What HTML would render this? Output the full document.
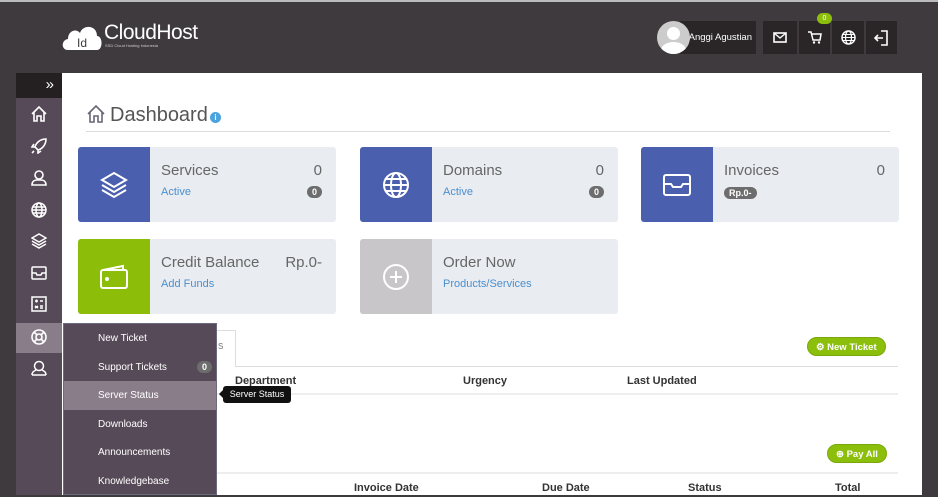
<!DOCTYPE html>
<html><head><meta charset="utf-8"><style>
*{margin:0;padding:0;box-sizing:border-box}
body{width:938px;height:495px;overflow:hidden;background:#3e3a3d;font-family:"Liberation Sans",sans-serif;position:relative}
.abs{position:absolute}
.main{left:62px;top:73px;width:860px;height:422px;background:#fff}
.side{left:16px;top:73px;width:46px;height:422px;background:#574a58}
.sidetop{left:16px;top:73px;width:46px;height:25px;background:#242022;color:#fff;font-size:15px;text-align:right;padding-right:8px;line-height:24px}
.si{position:absolute;left:16px;width:46px;height:30px;display:flex;align-items:center;justify-content:center}
.card{position:absolute;width:258px;height:75px;background:#e9ecf0;border-radius:3px;overflow:hidden}
.card .ic{position:absolute;left:0;top:0;width:72px;height:75px;display:flex;align-items:center;justify-content:center}
.card .t{position:absolute;left:83px;top:15px;font-size:15px;color:#666}
.card .v{position:absolute;right:14px;top:15px;font-size:15px;color:#666}
.card .l{position:absolute;left:83px;top:39px;font-size:11px;color:#4a8fd0}
.badge{position:absolute;background:#6d6d6d;color:#fff;font-size:9px;font-weight:bold;border-radius:8px;padding:1px 5px}
.dd{left:63px;top:323px;width:154px;height:172px;background:#574a58;border:1px solid #6a6a80}
.dd div{height:28.5px;line-height:30px;padding-left:34px;color:#fff;font-size:10px}
.th{position:absolute;font-size:11px;font-weight:bold;color:#333}
.btn{position:absolute;background:#8cbf0c;color:#fff;font-size:9.5px;font-weight:bold;border-radius:10px;height:19px;line-height:19px;padding:0 8px;border:1px solid #7aa80a}
.tb{position:absolute;top:21px;height:33px;background:#2a2627;display:flex;align-items:center;justify-content:center}
</style></head><body>
<div class="abs" style="left:0;top:0;width:938px;height:2px;background:#bbb"></div>
<!-- logo -->
<svg class="abs" style="left:61px;top:20px" width="42" height="32" viewBox="0 0 42 32"><path d="M7 30 C0 30 0 20 7 19 C7 11 15 8 19 13 C22 4 36 5 36 16 C42 16 42 30 36 30 Z" fill="#fff"/><text x="16" y="27" font-size="12" fill="#3e3a3d" font-family="Liberation Sans">Id</text></svg>
<div class="abs" style="left:104px;top:21px;color:#fff;font-size:21px;letter-spacing:-0.5px">CloudHost</div>
<div class="abs" style="left:105px;top:43px;color:#ccc;font-size:4px">SSD Cloud Hosting Indonesia</div>
<!-- top right -->
<div class="tb" style="left:680px;width:76px;justify-content:flex-end;padding-right:4px;color:#fff;font-size:9.5px">Anggi Agustian</div>
<div class="abs" style="left:657px;top:21px;width:33px;height:33px;border-radius:50%;background:#ccc;overflow:hidden"><div class="abs" style="left:10px;top:6px;width:13px;height:13px;border-radius:50%;background:#fff"></div><div class="abs" style="left:4px;top:21px;width:25px;height:16px;border-radius:50%;background:#fff"></div></div>
<div class="tb" style="left:763px;width:34px"><svg width="14" height="11"><rect x="1" y="1" width="12" height="9" fill="none" stroke="#fff" stroke-width="1.6"/><path d="M1 1 L7 6 L13 1" fill="none" stroke="#fff" stroke-width="1.4"/></svg></div>
<div class="tb" style="left:799px;width:31px"><svg width="14" height="13"><path d="M0 1H3L5 9H12L13 3H4" fill="none" stroke="#fff" stroke-width="1.5"/><circle cx="6" cy="11.5" r="1.2" fill="#fff"/><circle cx="11" cy="11.5" r="1.2" fill="#fff"/></svg></div>
<div class="abs" style="left:817px;top:13px;width:15px;height:11px;border-radius:6px;background:#8cbf0c;color:#fff;font-size:7px;text-align:center;line-height:11px">0</div>
<div class="tb" style="left:832px;width:32px"><svg width="15" height="15"><circle cx="7.5" cy="7.5" r="6.5" fill="none" stroke="#fff" stroke-width="1.5"/><ellipse cx="7.5" cy="7.5" rx="3" ry="6.5" fill="none" stroke="#fff" stroke-width="1.2"/><path d="M1 7.5H14M2 4.5H13M2 10.5H13" stroke="#fff" stroke-width="1.1"/></svg></div>
<div class="tb" style="left:866px;width:31px"><svg width="15" height="16"><path d="M7 1H13V15H7" fill="none" stroke="#fff" stroke-width="1.6"/><path d="M1 8H9M4 5L1 8L4 11" fill="none" stroke="#fff" stroke-width="1.6"/></svg></div>
<!-- main -->
<div class="abs main"></div>
<svg class="abs" style="left:86px;top:104px" width="20" height="20" viewBox="0 0 20 20"><path d="M2 10 L10 2 L18 10 M4 8 V18 H8 V12 H12 V18 H16 V8" fill="none" stroke="#667" stroke-width="1.6"/></svg>
<div class="abs" style="left:110px;top:104px;font-size:20px;color:#555">Dashboard</div>
<div class="abs" style="left:210px;top:112px;width:11px;height:11px;border-radius:50%;background:#4aa3df;color:#fff;font-size:8px;text-align:center;line-height:11px;font-weight:bold">i</div>
<div class="abs" style="left:86px;top:131px;width:804px;height:1px;background:#ddd"></div>

<div class="card" style="left:78px;top:147px"><div class="ic" style="background:#4a5fae"><svg width="30" height="30" viewBox="0 0 30 30" fill="none" stroke="#fff" stroke-width="2"><path d="M15 3L27 10L15 17L3 10Z"/><path d="M3 15L15 22L27 15"/><path d="M3 20L15 27L27 20"/></svg></div><div class="t">Services</div><div class="v">0</div><div class="l">Active</div><span class="badge" style="right:14px;top:39px">0</span></div>
<div class="card" style="left:360px;top:147px"><div class="ic" style="background:#4a5fae"><svg width="30" height="30" viewBox="0 0 30 30" fill="none" stroke="#fff" stroke-width="2"><circle cx="15" cy="15" r="12"/><ellipse cx="15" cy="15" rx="5" ry="12"/><path d="M3 15H27M5 9H25M5 21H25"/></svg></div><div class="t">Domains</div><div class="v">0</div><div class="l">Active</div><span class="badge" style="right:14px;top:39px">0</span></div>
<div class="card" style="left:641px;top:147px"><div class="ic" style="background:#4a5fae"><svg width="30" height="26" viewBox="0 0 30 26" fill="none" stroke="#fff" stroke-width="2"><rect x="2" y="3" width="26" height="20" rx="2"/><path d="M2 12H9L11 15H19L21 12H28"/></svg></div><div class="t">Invoices</div><div class="v">0</div><span class="badge" style="left:83px;top:40px">Rp.0-</span></div>
<div class="card" style="left:78px;top:239px"><div class="ic" style="background:#8cbd08"><svg width="30" height="26" viewBox="0 0 30 26" fill="none" stroke="#fff" stroke-width="2"><rect x="2" y="6" width="26" height="18" rx="2"/><path d="M4 6L24 2V6"/><circle cx="8" cy="15" r="1" fill="#fff"/></svg></div><div class="t">Credit Balance</div><div class="v">Rp.0-</div><div class="l">Add Funds</div></div>
<div class="card" style="left:360px;top:239px"><div class="ic" style="background:#c8c6c9"><svg width="30" height="30" viewBox="0 0 30 30" fill="none" stroke="#fff" stroke-width="2"><circle cx="15" cy="15" r="12"/><path d="M15 9V21M9 15H21"/></svg></div><div class="t">Order Now</div><div class="l">Products/Services</div></div>

<div class="abs" style="left:190px;top:330px;width:46px;height:37px;border:1px solid #ddd;border-bottom:none;background:#fff"></div>
<div class="abs" style="left:218px;top:340px;font-size:11px;color:#888">s</div>
<div class="abs" style="left:236px;top:366px;width:662px;height:1px;background:#ddd"></div>
<div class="btn" style="left:807px;top:337px">⚙ New Ticket</div>
<div class="th" style="left:235px;top:375px">Department</div>
<div class="th" style="left:463px;top:375px">Urgency</div>
<div class="th" style="left:627px;top:375px">Last Updated</div>
<div class="abs" style="left:217px;top:393px;width:681px;height:2px;background:#eee"></div>
<div class="btn" style="left:827px;top:444px">⊕ Pay All</div>
<div class="abs" style="left:217px;top:472px;width:681px;height:2px;background:#eee"></div>
<div class="th" style="left:354px;top:482px">Invoice Date</div>
<div class="th" style="left:542px;top:482px">Due Date</div>
<div class="th" style="left:688px;top:482px">Status</div>
<div class="th" style="left:835px;top:482px">Total</div>

<!-- sidebar -->
<div class="abs side"></div>
<div class="abs sidetop">»</div>
<div class="abs" style="left:16px;top:323px;width:46px;height:30px;background:#8a7d8a"></div>
<div class="si" style="top:99px"><svg width="16" height="16" fill="none" stroke="#fff" stroke-width="1.6"><path d="M1 8L8 1L15 8M3 6V15H6V10H10V15H13V6"/></svg></div>
<div class="si" style="top:131px"><svg width="16" height="16" fill="none" stroke="#fff" stroke-width="1.6"><path d="M15 1C9 1 5 5 4 9L7 12C11 11 15 7 15 1ZM4 9L1 9L3 6M7 12L7 15L10 13M3 13L1 15"/></svg></div>
<div class="si" style="top:163px"><svg width="16" height="16" fill="none" stroke="#fff" stroke-width="1.6"><circle cx="8" cy="5" r="4"/><path d="M1 15C1 11 4 10 6 10H10C12 10 15 11 15 15Z"/></svg></div>
<div class="si" style="top:195px"><svg width="16" height="16" fill="none" stroke="#fff" stroke-width="1.5"><circle cx="8" cy="8" r="7"/><ellipse cx="8" cy="8" rx="3" ry="7"/><path d="M1 8H15M2 5H14M2 11H14"/></svg></div>
<div class="si" style="top:226px"><svg width="16" height="16" fill="none" stroke="#fff" stroke-width="1.5"><path d="M8 1L15 5L8 9L1 5Z"/><path d="M1 8L8 12L15 8M1 11L8 15L15 11"/></svg></div>
<div class="si" style="top:258px"><svg width="16" height="14" fill="none" stroke="#fff" stroke-width="1.5"><rect x="1" y="1" width="14" height="12" rx="1"/><path d="M1 7H5L6 9H10L11 7H15"/></svg></div>
<div class="si" style="top:289px"><svg width="16" height="16" fill="none" stroke="#fff" stroke-width="1.5"><rect x="1" y="1" width="14" height="14"/><path d="M4 5H7M5.5 3.5V6.5M9 5H12M4 10L7 12M7 10L4 12M9 10H12M9 12H12"/></svg></div>
<div class="si" style="top:322px"><svg width="16" height="16" fill="none" stroke="#fff" stroke-width="1.6"><circle cx="8" cy="8" r="7"/><circle cx="8" cy="8" r="3"/><path d="M3 3L6 6M13 3L10 6M3 13L6 10M13 13L10 10"/></svg></div>
<div class="si" style="top:353px"><svg width="16" height="16" fill="none" stroke="#fff" stroke-width="1.5"><circle cx="8" cy="6" r="4.5"/><path d="M1 15C1 12 3 11 5 10M15 15C15 12 13 11 11 10M1 15H15"/></svg></div>
<!-- dropdown -->
<div class="abs dd">
<div>New Ticket</div>
<div>Support Tickets</div>
<div style="background:#8a7d8a">Server Status</div>
<div>Downloads</div>
<div>Announcements</div>
<div>Knowledgebase</div>
</div>
<span class="badge" style="left:197px;top:361px;background:#6d6d6d">0</span>
<div class="abs" style="left:223px;top:386px;width:68px;height:17px;background:#111;border-radius:3px;color:#fff;font-size:9px;line-height:17px;text-align:center">Server Status</div>
<div class="abs" style="left:219px;top:390px;width:0;height:0;border-top:4px solid transparent;border-bottom:4px solid transparent;border-right:4px solid #111"></div>
</body></html>
